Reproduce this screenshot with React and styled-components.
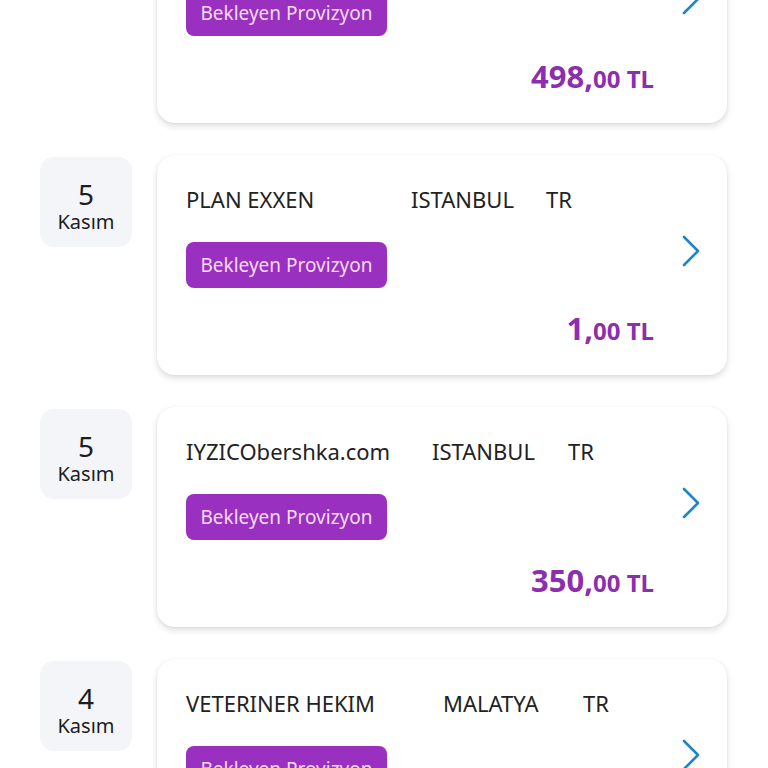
import React from "react";
import styled, { createGlobalStyle } from "styled-components";

const Global = createGlobalStyle`
  html, body { margin: 0; padding: 0; background: #ffffff; }
  body { font-family: "Noto Sans", "Open Sans", sans-serif; overflow: hidden; }
`;

const List = styled.div`
  display: flex;
  flex-direction: column;
  gap: 32px;
  padding: 0 40px 0 40px;
  margin-top: -97px;
`;

const Row = styled.div`
  display: flex;
  align-items: flex-start;
  gap: 25px;
`;

const DateBox = styled.div`
  flex: 0 0 92px;
  height: 90px;
  box-sizing: border-box;
  padding-top: 7px;
  margin-top: 2px;
  background: #f4f5f9;
  border-radius: 14px;
  display: flex;
  flex-direction: column;
  align-items: center;
  justify-content: center;
  color: #1d1d1f;
`;

const Day = styled.div`
  font-size: 28px;
  line-height: 32px;
`;

const Month = styled.div`
  font-size: 20px;
  line-height: 24px;
`;

const Card = styled.div`
  flex: 0 0 570px;
  height: 220px;
  box-sizing: border-box;
  background: #fff;
  border-radius: 18px;
  box-shadow: 0 3px 6px rgba(0, 0, 0, 0.14), 0 0 2px rgba(0, 0, 0, 0.06);
  display: grid;
  grid-template-columns: 1fr auto;
  column-gap: 27px;
  padding: 31px 26px 0 29px;
`;

const Body = styled.div`
  display: flex;
  flex-direction: column;
`;

const Title = styled.div`
  display: flex;
  min-height: 26px;
  font-size: 22px;
  line-height: 26px;
  color: #222;
  white-space: nowrap;
`;

const Field = styled.span`
  flex: 0 0 ${(p) => (p.$w ? `${p.$w}px` : "auto")};
`;

const Badge = styled.div`
  align-self: flex-start;
  margin-top: 30px;
  width: 201px;
  height: 46px;
  box-sizing: border-box;
  background: #9a30bf;
  border-radius: 8px;
  color: #f6dcf8;
  font-size: 19px;
  display: flex;
  align-items: center;
  justify-content: center;
`;

const Amount = styled.div`
  margin-top: 20px;
  align-self: flex-end;
  color: #8c2eae;
  font-weight: 700;
  display: flex;
  align-items: baseline;
  line-height: 40px;
`;

const Whole = styled.span`
  font-size: 31px;
`;

const Frac = styled.span`
  font-size: 24px;
`;

const Chevron = styled.svg`
  margin-top: 49px;
  width: 20px;
  height: 32px;
`;

const items = [
  { day: "5", title: [["", 0]], amount: ["498,", "00 TL"] },
  { day: "5", title: [["PLAN EXXEN", 225], ["ISTANBUL", 135], ["TR", 0]], amount: ["1,", "00 TL"] },
  { day: "5", title: [["IYZICObershka.com", 246], ["ISTANBUL", 136], ["TR", 0]], amount: ["350,", "00 TL"] },
  { day: "4", title: [["VETERINER HEKIM", 257], ["MALATYA", 140], ["TR", 0]], amount: ["0,", "00 TL"] },
];

export default function App() {
  return (
    <>
      <Global />
      <List>
        {items.map((it, i) => (
          <Row key={i}>
            <DateBox>
              <Day>{it.day}</Day>
              <Month>Kasım</Month>
            </DateBox>
            <Card>
              <Body>
                <Title>
                  {it.title.map(([t, w], j) => (
                    <Field key={j} $w={w}>{t}</Field>
                  ))}
                </Title>
                <Badge>Bekleyen Provizyon</Badge>
                <Amount>
                  <Whole>{it.amount[0]}</Whole>
                  <Frac>{it.amount[1]}</Frac>
                </Amount>
              </Body>
              <Chevron viewBox="0 0 20 32" fill="none">
                <path d="M3 2 L17 16 L3 30" stroke="#1e86c6" strokeWidth="2.6" strokeLinecap="round" strokeLinejoin="round" />
              </Chevron>
            </Card>
          </Row>
        ))}
      </List>
    </>
  );
}
